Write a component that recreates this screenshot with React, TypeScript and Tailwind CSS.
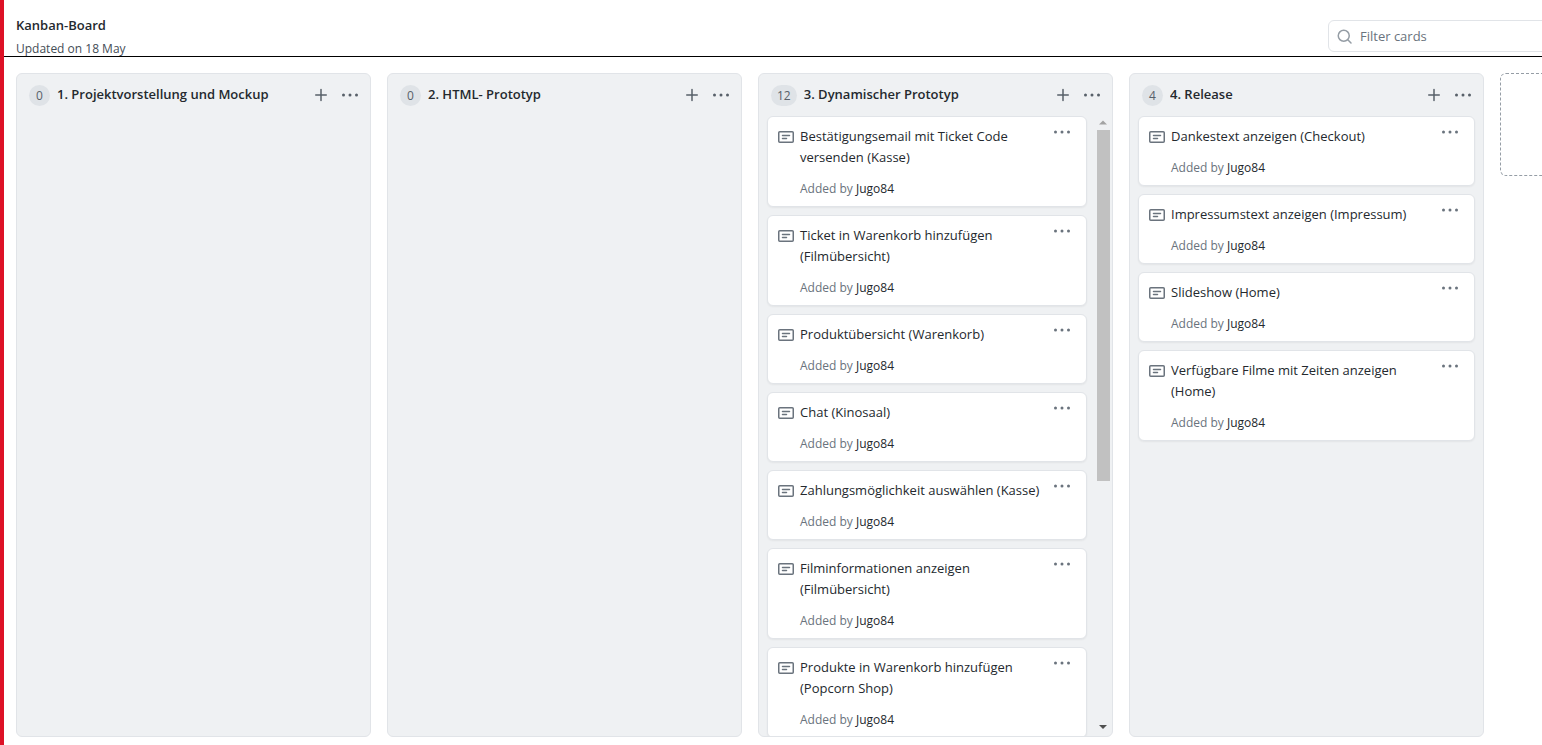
import React from "react";

type Column = {
  count: number;
  title: string;
  cards: string[];
  scrolls?: boolean;
};

const columns: Column[] = [
  { count: 0, title: "1. Projektvorstellung und Mockup", cards: [] },
  { count: 0, title: "2. HTML- Prototyp", cards: [] },
  {
    count: 12,
    title: "3. Dynamischer Prototyp",
    scrolls: true,
    cards: [
      "Bestätigungsemail mit Ticket Code versenden (Kasse)",
      "Ticket in Warenkorb hinzufügen (Filmübersicht)",
      "Produktübersicht (Warenkorb)",
      "Chat (Kinosaal)",
      "Zahlungsmöglichkeit auswählen (Kasse)",
      "Filminformationen anzeigen (Filmübersicht)",
      "Produkte in Warenkorb hinzufügen (Popcorn Shop)",
    ],
  },
  {
    count: 4,
    title: "4. Release",
    cards: [
      "Dankestext anzeigen (Checkout)",
      "Impressumstext anzeigen (Impressum)",
      "Slideshow (Home)",
      "Verfügbare Filme mit Zeiten anzeigen (Home)",
    ],
  },
];

function DotsIcon() {
  return (
    <svg width="18" height="16" viewBox="0 0 18 16" fill="currentColor" aria-hidden="true">
      <circle cx="2.5" cy="8" r="1.5" />
      <circle cx="9" cy="8" r="1.5" />
      <circle cx="15.5" cy="8" r="1.5" />
    </svg>
  );
}

function PlusIcon() {
  return (
    <svg width="12" height="16" viewBox="0 0 12 16" fill="none" stroke="currentColor" strokeWidth="1.5" strokeLinecap="round" aria-hidden="true">
      <path d="M6 2.5v11M.75 8h10.5" />
    </svg>
  );
}

function NoteIcon() {
  return (
    <svg width="16" height="16" viewBox="0 0 16 16" fill="none" stroke="currentColor" strokeWidth="1.5" strokeLinecap="round" aria-hidden="true">
      <rect x=".75" y="2.75" width="14.5" height="10.5" rx="1" />
      <path d="M4.5 6.5h7M4.5 9.5h4" />
    </svg>
  );
}

function SearchIcon() {
  return (
    <svg width="16" height="16" viewBox="0 0 16 16" fill="none" stroke="currentColor" strokeWidth="1.5" strokeLinecap="round" aria-hidden="true">
      <circle cx="6.75" cy="7.75" r="5.5" />
      <path d="M10.8 11.8l3.2 3.2" />
    </svg>
  );
}

function Card({ title }: { title: string }) {
  return (
    <article className="flex shrink-0 rounded-md border border-[#e1e4e8] bg-white pb-[7px] pl-2.5 pr-[15px] pt-[9px] leading-[21px] shadow-[0_1px_2px_rgba(27,31,35,0.06)]">
      <span className="mt-[3px] h-4 w-4 shrink-0 text-[#6a737d]">
        <NoteIcon />
      </span>
      <div className="ml-1.5 min-w-0 flex-1">
        <h3 className="text-[13px] leading-[21px] text-[#24292e]">{title}</h3>
        <p className="mt-2.5 text-[12px] leading-[21px] text-[#6a737d]">
          Added by{" "}
          <a href="#jugo84" className="text-[#24292e]">
            Jugo84
          </a>
        </p>
      </div>
      <button type="button" aria-label="Card options" className="-mt-0.5 h-4 w-[18px] shrink-0 text-[#6a737d]">
        <DotsIcon />
      </button>
    </article>
  );
}

function Scrollbar() {
  return (
    <div aria-hidden="true" className="flex w-[17px] shrink-0 flex-col items-center pr-px">
      <svg width="8" height="14" viewBox="0 0 8 14" className="shrink-0" fill="#a3a3a3">
        <path d="M0 8.5L4 4.5l4 4z" />
      </svg>
      <div className="flex min-h-0 w-[13px] flex-1 flex-col">
        <div className="h-[351px] bg-[#c1c1c1]" />
      </div>
      <svg width="8" height="16" viewBox="0 0 8 16" className="shrink-0" fill="#505050">
        <path d="M0 5h8l-4 4z" />
      </svg>
    </div>
  );
}

function BoardColumn({ column }: { column: Column }) {
  return (
    <section className="flex w-[355px] shrink-0 flex-col overflow-hidden rounded-md border border-[#e1e4e8] bg-[#eff1f3]">
      <header className="flex h-[42px] shrink-0 items-center pb-px pl-3 pr-[11px]">
        <span className="mt-0.5 flex h-[21px] min-w-[21px] items-center justify-center rounded-full bg-[#dfe3e7] px-1.5 text-xs text-[#586069]">
          {column.count}
        </span>
        <h2 className="ml-[7px] min-w-0 flex-1 truncate text-[13px] font-semibold leading-[21px] text-[#24292e]">
          {column.title}
        </h2>
        <button type="button" aria-label="Add a card" className="text-[#586069]">
          <PlusIcon />
        </button>
        <button type="button" aria-label="Column options" className="ml-3.5 text-[#586069]">
          <DotsIcon />
        </button>
      </header>
      <div className="flex min-h-0 flex-1">
        <div className="flex min-w-0 flex-1 flex-col gap-2 overflow-y-auto px-2 [scrollbar-width:none]">
          {column.cards.map((card) => (
            <Card key={card} title={card} />
          ))}
        </div>
        {column.scrolls && <Scrollbar />}
      </div>
    </section>
  );
}

export default function App() {
  return (
    <div className="flex h-screen flex-col overflow-hidden border-l-4 border-[#dd1126] bg-white font-['Open_Sans','Noto_Sans',sans-serif] text-[#24292e]">
      <header className="flex h-[57px] shrink-0 items-start justify-between border-b border-black pl-3">
        <div className="pt-[15px]">
          <h1 className="text-[13px] font-semibold leading-[21px]">Kanban-Board</h1>
          <p className="mt-1 text-[12px] leading-[18px] text-[#444d56]">Updated on 18 May</p>
        </div>
        <label className="-mr-4 mt-5 flex h-8 w-[230px] items-center rounded-md border border-[#e1e4e8] pl-2 text-[#959da5]">
          <SearchIcon />
          <input
            type="text"
            aria-label="Filter cards"
            placeholder="Filter cards"
            className="ml-[7px] min-w-0 flex-1 pt-0.5 text-[13px] text-[#24292e] outline-none placeholder:text-[#6a737d]"
          />
        </label>
      </header>
      <main className="flex min-h-0 flex-1 gap-4 overflow-x-auto px-3 pb-2 pt-4 [scrollbar-width:none]">
        {columns.map((column) => (
          <BoardColumn key={column.title} column={column} />
        ))}
        <button
          type="button"
          aria-label="Add column"
          className="h-[103px] w-[355px] shrink-0 rounded-md border border-dashed border-[#959da5]"
        />
      </main>
    </div>
  );
}
